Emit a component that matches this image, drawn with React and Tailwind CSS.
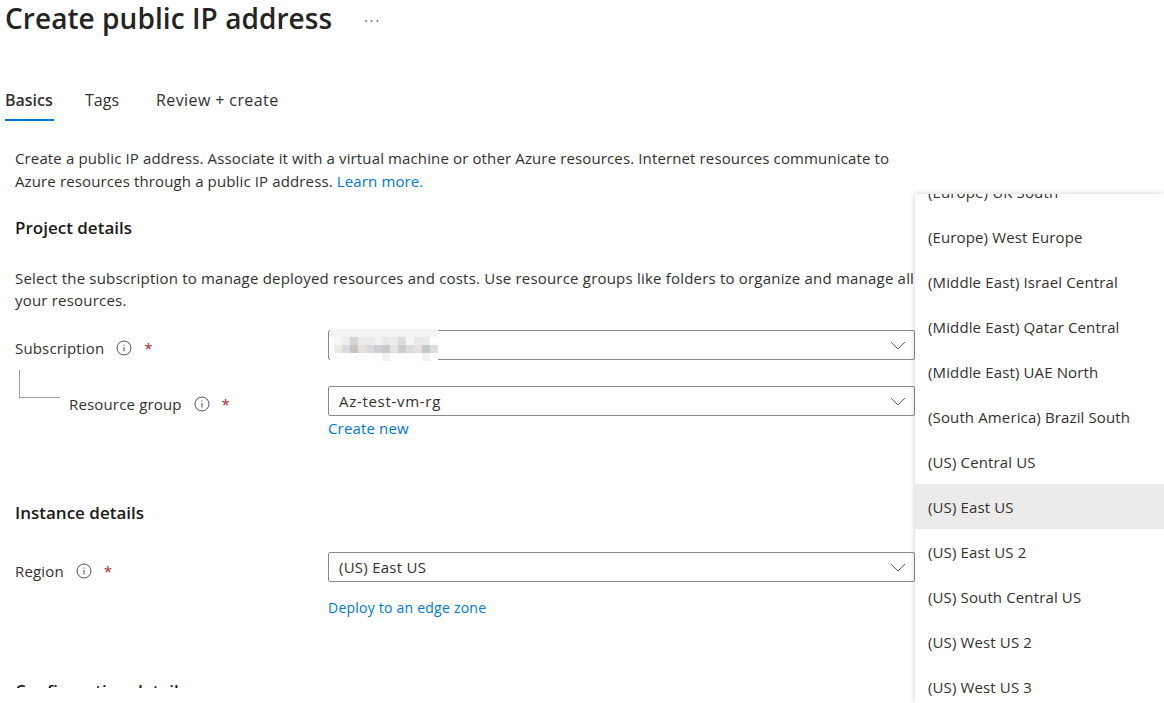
import React from 'react';

const font = { fontFamily: '"Open Sans", "Noto Sans", sans-serif' };

const regions = [
  '(Europe) UK South',
  '(Europe) West Europe',
  '(Middle East) Israel Central',
  '(Middle East) Qatar Central',
  '(Middle East) UAE North',
  '(South America) Brazil South',
  '(US) Central US',
  '(US) East US',
  '(US) East US 2',
  '(US) South Central US',
  '(US) West US 2',
  '(US) West US 3',
];

// pixelated blur over the subscription name
const blurRows = [
  ['#f3f3f1', '#f3f3f1', '#f3f3f1', '#f3f3f1', '#f3f3f1', '#f3f3f1', '#f3f3f1', '#f3f3f1', '#f3f3f1', '#f3f3f1', '#f3f3f1', '#f3f3f1', '#f3f3f1'],
  ['#f8f8f8', '#eeeef0', '#d8d4d6', '#eceaea', '#e8eaee', '#f4f2f0', '#e8e8e8', '#ebebeb', '#dcdcdc', '#f6f6f6', '#e8e8e8', '#e8eaee', '#ffffff'],
  ['#eeeae6', '#d8dce0', '#c8c4c4', '#e4e0dc', '#d8dce0', '#d0ccd0', '#c8cccc', '#e4e4e4', '#c8cccc', '#dcdcdc', '#e4e0e4', '#c4c8c4', '#dce0e0'],
  ['#ffffff', '#ffffff', '#ffffff', '#ffffff', '#ffffff', '#ffffff', '#f2f2f2', '#ffffff', '#ffffff', '#ffffff', '#ffffff', '#f2f2f2', '#ffffff'],
];

function Info() {
  return (
    <svg width="16" height="16" viewBox="0 0 16 16" fill="none" className="shrink-0">
      <circle cx="8" cy="8" r="7" stroke="#50504e" strokeWidth="1" />
      <rect x="7.5" y="7" width="1" height="4.5" fill="#50504e" />
      <rect x="7.5" y="4.6" width="1" height="1.2" fill="#50504e" />
    </svg>
  );
}

function Chevron() {
  return (
    <svg width="16" height="9" viewBox="0 0 16 9" fill="none" className="shrink-0">
      <path d="M1 1l7 7 7-7" stroke="#605e5c" strokeWidth="1" />
    </svg>
  );
}

function FieldLabel({ text, indent = '' }) {
  return (
    <div className={`flex items-center gap-[12px] text-[15px] tracking-[0.16px] text-[#323130] ${indent}`}>
      <span>{text}</span>
      <Info />
      <span className="text-[#a4262c]">*</span>
    </div>
  );
}

function Select({ children, valueClass = 'tracking-[0.25px]' }) {
  return (
    <div className="relative flex h-[30px] w-[587px] items-center justify-between rounded-[2px] border border-[#8a8886] pl-[10px] pr-[8px] text-[15px] text-[#323130]">
      <span className={valueClass}>{children}</span>
      <Chevron />
    </div>
  );
}

export default function App() {
  return (
    <div className="relative h-[703px] w-[1164px] overflow-hidden bg-white" style={font}>
      <div className="h-[688px] overflow-hidden">
        <div className="flex h-[37px] items-center pl-[5px]">
          <h1 className="text-[28px] font-semibold leading-[37px] tracking-[0.06px] text-[#252423]">Create public IP address</h1>
          <span className="ml-[32px] mt-[4px] text-[14px] leading-none tracking-[2px] text-[#605e5c]">···</span>
        </div>

        <div className="mt-[46px] flex pl-[5px] text-[16px] text-[#323130]">
          <div className="h-[38px] w-[49px] border-b-2 border-[#0078d4] pt-[5px] font-semibold">Basics</div>
          <div className="ml-[31px] pt-[5px]">Tags</div>
          <div className="ml-[37px] pt-[5px] tracking-[0.4px]">Review + create</div>
        </div>

        <div className="mt-[26px] pl-[15px] pr-[270px] text-[15px] leading-[23px] tracking-[0.13px] text-[#323130]">
          <p>
            Create a public IP address. Associate it with a virtual machine or other Azure resources. Internet resources communicate to Azure resources through a public IP address.{' '}
            <span className="text-[#0078d4]">Learn more.</span>
          </p>
        </div>

        <h2 className="mt-[24px] pl-[15px] text-[17px] font-semibold leading-[22px] text-[#1b1a19]">Project details</h2>

        <p className="mt-[28px] pl-[15px] pr-[240px] text-[15px] leading-[22px] tracking-[0.2px] text-[#323130]">
          Select the subscription to manage deployed resources and costs. Use resource groups like folders to organize and manage all your resources.
        </p>

        <div className="mt-[19px] flex pl-[15px]">
          <div className="w-[313px] pt-[7px]">
            <FieldLabel text="Subscription" />
          </div>
          <div className="relative">
            <Select>&nbsp;</Select>
            {/* blurred value lies over the field */}
            <div className="absolute left-[2px] top-[-1px] flex flex-col">
              {blurRows.map((row, i) => (
                <div key={i} className="flex">
                  <div className={`h-[8px] w-[4px] ${i === 0 ? 'bg-[#f3f3f1]' : 'bg-white'}`} />
                  {row.map((c, j) => (
                    <div key={j} className="h-[8px] w-[8px]" style={{ backgroundColor: c }} />
                  ))}
                </div>
              ))}
            </div>
          </div>
        </div>

        <div className="mt-[26px] flex pl-[15px]">
          <div className="relative w-[313px] pt-[7px]">
            {/* tree connector from subscription to resource group */}
            <div className="absolute left-[4px] top-[-16px] h-[28px] w-[41px] border-b border-l border-[#a19f9d]" />
            <FieldLabel text="Resource group" indent="pl-[54px]" />
          </div>
          <div>
            <Select valueClass="tracking-[0.7px]">Az-test-vm-rg</Select>
            <div className="mt-[1px] text-[15px] leading-[22px] tracking-[0.16px] text-[#0078d4]">Create new</div>
          </div>
        </div>

        <h2 className="mt-[63px] pl-[15px] text-[17px] font-semibold leading-[22px] text-[#1b1a19]">Instance details</h2>

        <div className="mt-[28px] flex pl-[15px]">
          <div className="w-[313px] pt-[8px]">
            <FieldLabel text="Region" />
          </div>
          <div>
            <Select>(US) East US</Select>
            <div className="mt-[15px] text-[14px] leading-[22px] tracking-[0.23px] text-[#0078d4]">Deploy to an edge zone</div>
          </div>
        </div>

        <h2 className="mt-[61px] pl-[15px] text-[17px] font-semibold leading-[22px] text-[#1b1a19]">Configuration details</h2>
      </div>

      {/* open region dropdown */}
      <div className="absolute bottom-0 left-[915px] top-[194px] w-[249px] overflow-hidden bg-white shadow-[0_0_6px_rgba(0,0,0,0.2)]">
        <div className="mt-[-25px]">
          {regions.map((r) => (
            <div
              key={r}
              className={`flex h-[45px] items-center pl-[13px] pt-[2px] text-[15px] tracking-[0.13px] text-[#323130] ${r === '(US) East US' ? 'bg-[#edebe9]' : ''}`}
            >
              {r}
            </div>
          ))}
        </div>
      </div>
    </div>
  );
}
